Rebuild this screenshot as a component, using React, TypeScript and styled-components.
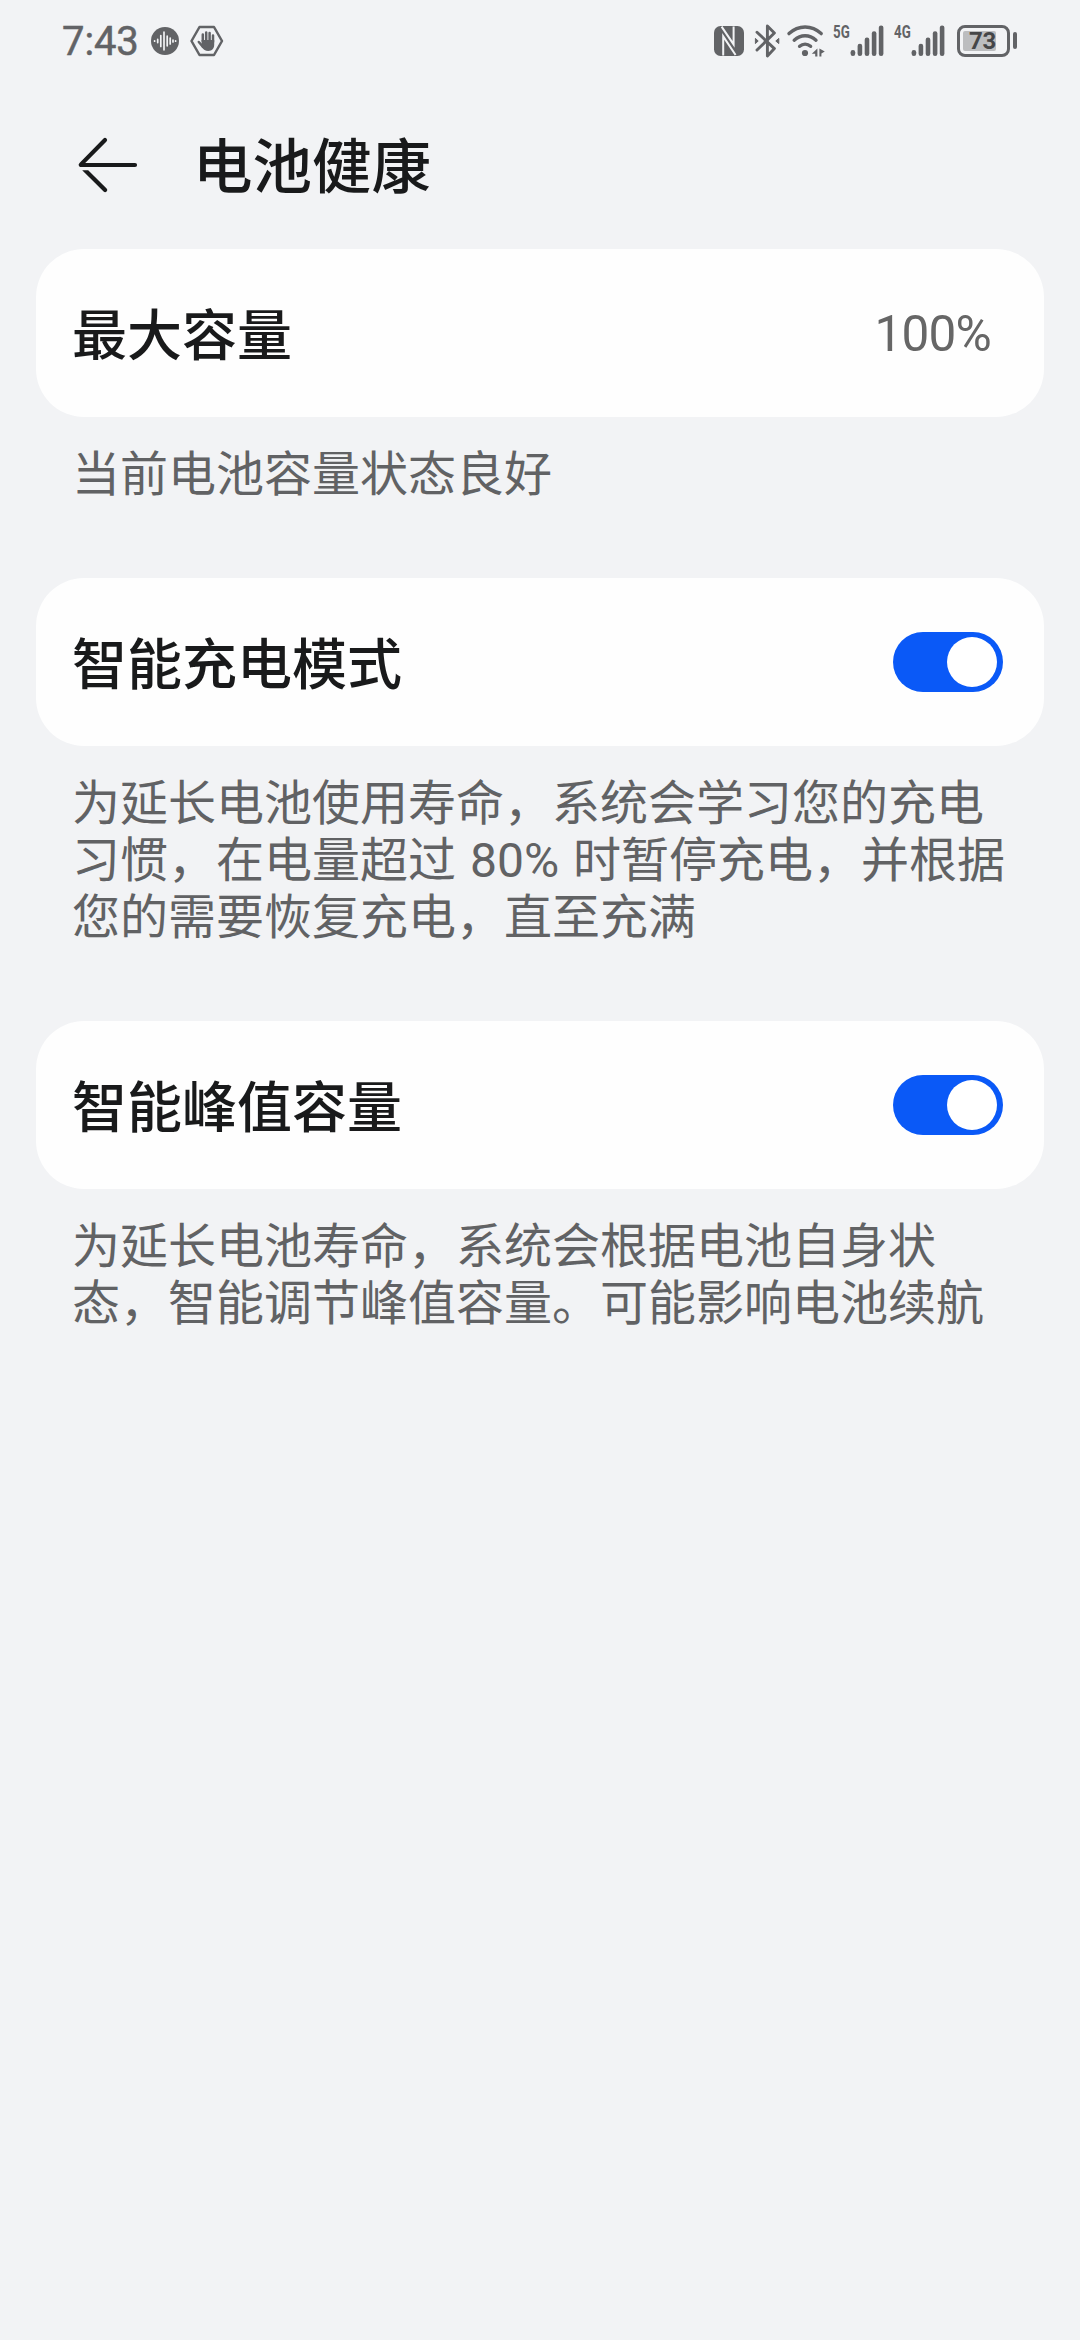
import React from "react";
import styled, { createGlobalStyle } from "styled-components";

const INK = "#191a1b";
const GREY = "#616264";
const STATUS = "#626366";
const PAPER = "#f2f3f5";

const GlobalStyle = createGlobalStyle`
  * { box-sizing: border-box; }
  html, body { margin: 0; background: ${PAPER}; }
`;

const Page = styled.div`
  width: 1080px;
  min-height: 2340px;
  background: ${PAPER};
  font-family: "Noto Sans CJK SC", sans-serif;
  color: ${INK};
`;

const StatusBar = styled.header`
  display: flex;
  align-items: center;
  justify-content: space-between;
  height: 81px;
  padding: 0 63px 0 62px;
  color: ${STATUS};
`;

const StatusGroup = styled.div`
  display: flex;
  align-items: center;
`;

const Clock = styled.span`
  width: 89px;
  padding-top: 2px;
  font: 400 40px/48px Roboto, sans-serif;
  letter-spacing: -0.1px;
  -webkit-text-stroke: 0.5px ${STATUS};
`;

const Icon = styled.svg<{ $gap?: number }>`
  display: block;
  flex: none;
  margin-left: ${(p) => p.$gap ?? 0}px;
  overflow: visible;
`;

const Signal = styled.div<{ $gap: number }>`
  display: flex;
  align-items: flex-start;
  height: 32px;
  margin-left: ${(p) => p.$gap}px;
`;

const Network = styled.span<{ $width: number }>`
  width: ${(p) => p.$width}px;
  font: 700 18px/14px Roboto, sans-serif;
  white-space: nowrap;
`;

const NetworkLabel = styled.span`
  display: inline-block;
  transform: scaleX(0.74);
  transform-origin: left;
`;

const Battery = styled.div`
  display: flex;
  align-items: center;
  gap: 3px;
  margin-left: 12px;
`;

const BatteryShell = styled.div`
  width: 53px;
  height: 32px;
  padding: 3px;
  border: 3px solid ${STATUS};
  border-radius: 8px;
`;

const BatteryLevel = styled.div`
  width: 33px;
  height: 20px;
  padding-left: 6px;
  border-radius: 2px;
  background: #bcbdbf;
  color: #454648;
  font: 700 24px/21px Roboto, sans-serif;
  letter-spacing: -0.3px;
`;

const BatteryTip = styled.div`
  width: 4px;
  height: 17px;
  border-radius: 2px;
  background: ${STATUS};
`;

const TitleBar = styled.div`
  display: flex;
  align-items: center;
  height: 168px;
  padding: 0 0 0 76px;
`;

const BackButton = styled.button`
  display: block;
  width: 64px;
  height: 56px;
  margin: 0 53px 0 0;
  padding: 0;
  border: 0;
  background: none;
`;

const Title = styled.h1`
  margin: 0;
  padding-bottom: 7px;
  font-size: 59.5px;
  line-height: 80px;
  font-weight: 500;
`;

const Section = styled.section`
  margin-bottom: 79px;
  padding: 0 36px;
`;

const Card = styled.div`
  display: flex;
  align-items: center;
  justify-content: space-between;
  height: 168px;
  padding: 0 41px 0 36px;
  border-radius: 48px;
  background: #fefefe;
`;

const Label = styled.h2`
  margin: 0;
  padding-bottom: 5px;
  font-size: 55px;
  line-height: 80px;
  font-weight: 500;
`;

const Value = styled.span`
  margin-right: 12px;
  padding-top: 2px;
  color: #666;
  font: 400 49.5px/60px Roboto, sans-serif;
  letter-spacing: -0.8px;
`;

const Note = styled.p`
  margin: 25px 0 0;
  padding: 0 36px;
  color: ${GREY};
  font-size: 48px;
  line-height: 57px;
`;

const Latin = styled.span`
  font-family: Roboto, sans-serif;
  line-height: 0;
  word-spacing: 2px;
`;

const Toggle = styled.button`
  display: flex;
  align-items: center;
  justify-content: flex-end;
  width: 110px;
  height: 60px;
  padding: 0 6px;
  border: 0;
  border-radius: 30px;
  background: #0a59f7;
`;

const Knob = styled.span`
  width: 50px;
  height: 50px;
  border-radius: 50%;
  background: #fff;
`;

const SignalBars = () => (
  <Icon width="34" height="32" viewBox="0 0 34 32" fill={STATUS}>
    <rect x="0.6" y="25" width="4.6" height="6" rx="2.2" />
    <rect x="7.6" y="18.7" width="4.6" height="12.3" rx="2.2" />
    <rect x="14.7" y="12.6" width="4.6" height="18.4" rx="2.2" />
    <rect x="21.8" y="6.3" width="4.6" height="24.7" rx="2.2" />
    <rect x="28.8" y="0.6" width="4.6" height="30.4" rx="2.2" />
  </Icon>
);

const VoiceIcon = () => (
  <Icon width="28" height="28" viewBox="0 0 28 28">
    <circle cx="14" cy="14" r="14" fill={STATUS} />
    <g stroke={PAPER} strokeWidth="1.7" strokeLinecap="round">
      <path d="M3.6 13.8v.4M6.7 12.4v3.2M9.8 8.6v10.8M13 5.2v17.6M16.2 9.2v9.6M19.2 11v6M22 13v2M24.6 13.8v.4" />
    </g>
  </Icon>
);

const HandIcon = () => (
  <Icon $gap={11} width="34" height="32" viewBox="0 0 34 32">
    <path
      d="M9.5 2h14.5l8 14-8 14H9.5l-8-14z"
      fill="none"
      stroke={STATUS}
      strokeWidth="2.5"
      strokeLinejoin="round"
    />
    <g stroke={STATUS} strokeWidth="2.5" strokeLinecap="round" fill="none">
      <path d="M12.8 16V9.6M16.2 15V7.6M19.6 15V8M23 17v-6.6" />
      <path d="M8.8 17l4 4.6" />
    </g>
    <path
      d="M11.6 15h12.6v4.5c0 4.2-2.2 6.4-5.9 6.4-3 0-4.8-1.2-6.7-3.9z"
      fill={STATUS}
    />
  </Icon>
);

const NfcIcon = () => (
  <Icon width="30" height="30" viewBox="0 0 30 30">
    <rect width="30" height="30" rx="6.5" fill={STATUS} />
    <path
      d="M7.6 .6L19.6 18.4V.4M9.2 29.6V10.4L21.6 29"
      fill="none"
      stroke={PAPER}
      strokeWidth="2"
    />
  </Icon>
);

const BluetoothIcon = () => (
  <Icon $gap={10} width="26" height="34" viewBox="0 0 26 34">
    <path
      d="M3 8.2L20.4 24.6 13.4 32V2l7 7L3 26"
      fill="none"
      stroke={STATUS}
      strokeWidth="2.9"
      strokeLinecap="round"
      strokeLinejoin="round"
    />
    <path d="M1.4 14.4L4.2 17l-2.8 2.6zM24.8 14.4L21.8 17l3 2.6z" fill={STATUS} stroke={STATUS} strokeWidth="1" />
  </Icon>
);

const WifiIcon = () => (
  <Icon $gap={7} width="38" height="32" viewBox="0 0 38 32">
    <g fill="none" stroke={STATUS} strokeWidth="3.4" strokeLinecap="round">
      <path d="M2 8.6C11.5-.2 24.7-.2 34.2 8.6" />
      <path d="M7.2 15.2c6.6-6 15.2-6 21.8 0" />
      <path d="M12.6 21.3c3.3-2.8 7.7-2.8 11 0" />
    </g>
    <circle cx="18" cy="28" r="3.1" fill={STATUS} />
    <path d="M30.4 23.4v8h-2.2v-2.6h-3.4zM32.4 31.4v-8l5.4 3.2-3.4 1.8v3z" fill={STATUS} />
  </Icon>
);

const BackIcon = () => (
  <Icon width="64" height="56" viewBox="0 0 64 56">
    <path
      d="M29 3L5 27.4c-.5.5-.3.6.4.6H59"
      fill="none"
      stroke={INK}
      strokeWidth="4.2"
      strokeLinecap="round"
      strokeLinejoin="round"
    />
    <path
      d="M6.2 33.2h6L30.6 51.4a2.1 2.1 0 0 1-3 3z"
      fill={INK}
    />
  </Icon>
);

const Switch = ({ name }: { name: string }) => (
  <Toggle type="button" role="switch" aria-checked="true" aria-label={name}>
    <Knob />
  </Toggle>
);

const CellSignal = ({ kind, gap, width }: { kind: string; gap: number; width: number }) => (
  <Signal $gap={gap}>
    <Network $width={width}>
      <NetworkLabel>{kind}</NetworkLabel>
    </Network>
    <SignalBars />
  </Signal>
);

export default function App() {
  return (
    <Page lang="zh-CN">
      <GlobalStyle />
      <StatusBar>
        <StatusGroup>
          <Clock>7:43</Clock>
          <VoiceIcon />
          <HandIcon />
        </StatusGroup>
        <StatusGroup>
          <NfcIcon />
          <BluetoothIcon />
          <WifiIcon />
          <CellSignal kind="5G" gap={8} width={17} />
          <CellSignal kind="4G" gap={10} width={17} />
          <Battery>
            <BatteryShell>
              <BatteryLevel>73</BatteryLevel>
            </BatteryShell>
            <BatteryTip />
          </Battery>
        </StatusGroup>
      </StatusBar>

      <TitleBar>
        <BackButton type="button" aria-label="返回">
          <BackIcon />
        </BackButton>
        <Title>电池健康</Title>
      </TitleBar>

      <Section>
        <Card>
          <Label>最大容量</Label>
          <Value>100%</Value>
        </Card>
        <Note>当前电池容量状态良好</Note>
      </Section>

      <Section>
        <Card>
          <Label>智能充电模式</Label>
          <Switch name="智能充电模式" />
        </Card>
        <Note>
          为延长电池使用寿命，系统会学习您的充电习惯，在电量超过<Latin> 80% </Latin>
          时暂停充电，并根据您的需要恢复充电，直至充满
        </Note>
      </Section>

      <Section>
        <Card>
          <Label>智能峰值容量</Label>
          <Switch name="智能峰值容量" />
        </Card>
        <Note>为延长电池寿命，系统会根据电池自身状态，智能调节峰值容量。可能影响电池续航</Note>
      </Section>
    </Page>
  );
}
